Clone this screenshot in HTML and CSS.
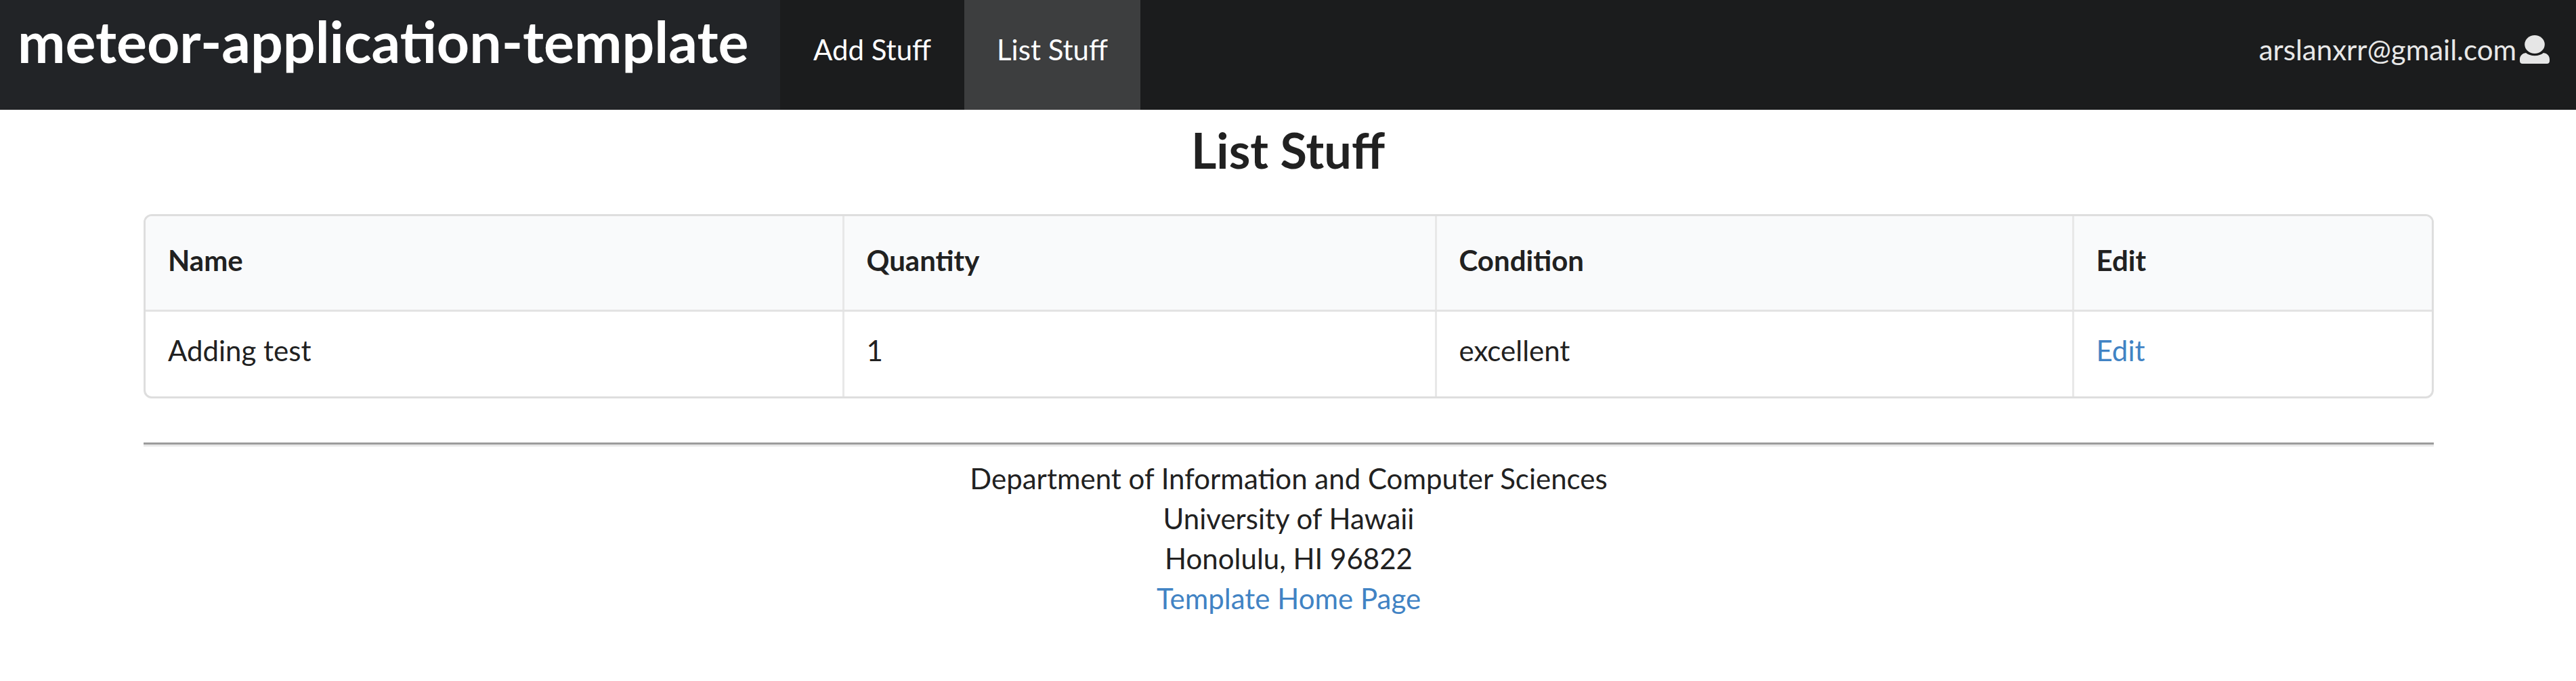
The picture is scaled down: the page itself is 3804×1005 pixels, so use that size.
FILE: index.html
```html
<!DOCTYPE html>
<html lang="en">
<head>
<meta charset="utf-8">
<title>List Stuff</title>
<link rel="stylesheet" href="styles.css">
</head>
<body>
<nav class="navbar">
  <a class="brand" href="#">meteor-application-template</a>
  <a class="nav-link" href="#">Add Stuff</a>
  <a class="nav-link active" href="#">List Stuff</a>
  <a class="user" href="#">arslanxrr@gmail.com<svg class="user-icon" viewBox="0 0 44 42" aria-hidden="true"><ellipse cx="22" cy="13.5" rx="14.8" ry="13.5"/><path d="M9 26c3 2.6 7.500 4.200 13 4.200S32 28.600 35 26c5.500.6 9 4.600 9 9.500V38c0 2.500-1.500 4-4 4H4c-2.500 0-4-1.500-4-4v-2.500C0 30.600 3.500 26.600 9 26Z"/></svg></a>
</nav>
<main class="container">
  <h2 class="title">List Stuff</h2>
  <div class="table-wrap">
    <table class="stuff">
      <thead>
        <tr><th class="c1">Name</th><th class="c2">Quantity</th><th class="c3">Condition</th><th>Edit</th></tr>
      </thead>
      <tbody>
        <tr><td>Adding test</td><td>1</td><td>excellent</td><td><a href="#">Edit</a></td></tr>
      </tbody>
    </table>
  </div>
  <footer class="footer">
    <hr class="rule">
    Department of Information and Computer Sciences<br>
    University of Hawaii<br>
    Honolulu, HI 96822<br>
    <a href="#">Template Home Page</a>
  </footer>
</main>
</body>
</html>
```
FILE: styles.css
```css
* { box-sizing: border-box; }
html, body { margin: 0; background: #fff; }
body {
  font-family: Lato, "Liberation Sans", sans-serif;
  font-size: 42px;
  line-height: 59px;
  color: #212121;
}
a { color: #4183c4; text-decoration: none; }
.navbar {
  display: flex;
  align-items: stretch;
  height: 162px;
  background: #1b1c1d;
}
.brand {
  display: flex;
  align-items: center;
  width: 1152px;
  height: 162px;
  padding: 0 0 42px 26px;
  background: #222427;
  color: #fff;
  font-size: 84.2px;
  font-weight: 700;
  white-space: nowrap;
}
.nav-link {
  display: flex;
  align-items: center;
  justify-content: center;
  width: 272px;
  padding-bottom: 16px;
  color: #fff;
}
.nav-link.active { width: 260px; background: #3d3e3f; }
.user {
  display: flex;
  align-items: center;
  gap: 5px;
  margin-left: auto;
  padding: 0 39px 16px 0;
  color: #e8e8e8;
}
.user-icon { width: 44px; height: 42px; fill: #e6e6e6; }
.container { width: 3382px; margin-left: 212px; }
.title {
  margin: 0;
  padding: 18px 2px 0 0;
  height: 154px;
  text-align: center;
  font-size: 72px;
  line-height: 82px;
  font-weight: 700;
}
.table-wrap {
  border: 3px solid #dedede;
  border-radius: 12px;
  overflow: hidden;
}
.stuff { width: 100%; border-collapse: collapse; table-layout: fixed; }
.stuff th, .stuff td {
  padding: 0 33px;
  text-align: left;
  border-left: 3px solid #e8e8e8;
}
.stuff th:first-child, .stuff td:first-child { border-left: 0; }
.stuff th {
  height: 139px;
  padding-bottom: 7px;
  background: #f9fafb;
  font-weight: 700;
  border-bottom: 3px solid #e3e3e3;
}
.stuff td { height: 127px; padding-bottom: 9px; }
.c1 { width: 1030px; }
.c2 { width: 875px; }
.c3 { width: 941px; }
.footer { text-align: center; }
.rule {
  height: 6px;
  margin: 65px 0 18px;
  border: 0;
  border-top: 3px solid #9c9c9c;
  border-bottom: 3px solid #e8e8e8;
}
```
